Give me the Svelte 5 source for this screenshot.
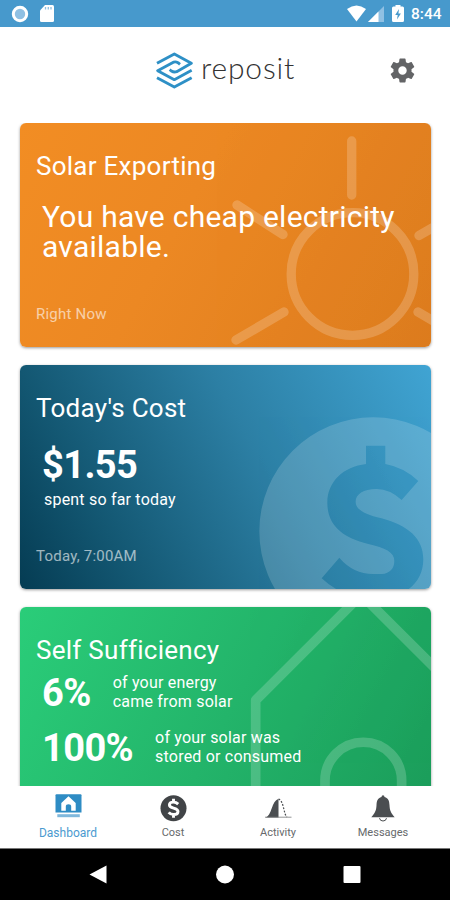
<script>
  const tabs = [
    { id: "dashboard", label: "Dashboard" },
    { id: "cost", label: "Cost" },
    { id: "activity", label: "Activity" },
    { id: "messages", label: "Messages" },
  ];

  const sufficiency = [
    { value: "6%", lines: ["of your energy", "came from solar"] },
    { value: "100%", lines: ["of your solar was", "stored or consumed"] },
  ];

  let active = $state("dashboard");
</script>

<div class="screen">
  <div class="status">
    <svg class="sync" width="18" height="18" viewBox="0 0 18 18">
      <circle cx="9" cy="9" r="6.700" fill="#8fc0e3" stroke="#fff" stroke-width="3" />
    </svg>
    <svg class="sd" width="14" height="17" viewBox="0 0 14 17">
      <path d="M5 0H12.500Q14 0 14 1.500V15.500Q14 17 12.500 17H1.500Q0 17 0 15.500V5.500Z" fill="#fff" />
      <path d="M5.500 2V4.500M8.300 2V4.500M11 2V4.500" stroke="#8fc0e3" stroke-width="1.300" />
    </svg>
    <span class="spacer"></span>
    <svg class="wifi" width="19" height="17" viewBox="0 0 19 17">
      <path d="M0 4Q9.500 -3 19 4L9.500 16.500Z" fill="#fff" />
    </svg>
    <svg class="signal" width="16" height="16" viewBox="0 0 16 16">
      <path d="M16 0V16H0Z" fill="#8fc0e3" />
      <path d="M10.500 5.500V16H0Z" fill="#fff" />
    </svg>
    <svg class="battery" width="12" height="17" viewBox="0 0 12 17">
      <path d="M3.500 0H8.500V1.500H10.500Q12 1.500 12 3V15.500Q12 17 10.500 17H1.500Q0 17 0 15.500V3Q0 1.500 1.500 1.500H3.500Z" fill="#fff" />
      <path d="M7 4L3.200 10H5.700L5 14.500L8.900 8.400H6.400Z" fill="#4799cc" />
    </svg>
    <span class="clock">8:44</span>
  </div>

  <header>
    <div class="brand">
      <svg width="37" height="37" viewBox="0 0 111 111">
        <g fill="none" stroke="#2e90c6" stroke-width="8.500" stroke-linejoin="round">
          <path d="M3 34L55 6L106 34L62 59Q54 62 46 57L41 53" />
          <path d="M72 37L66 32Q57 27 48 33L5 56L55 83L107 55" />
          <path d="M3 77L55 105L107 77" />
        </g>
      </svg>
      <span>reposit</span>
    </div>
    <svg class="gear" width="29" height="29" viewBox="0 0 24 24">
      <path
        fill="#636466"
        d="M19.430 12.980c.04-.32.07-.64.07-.98s-.03-.66-.07-.98l2.110-1.650c.19-.15.24-.42.12-.64l-2-3.460c-.12-.22-.39-.3-.61-.22l-2.490 1c-.52-.4-1.080-.73-1.690-.98l-.38-2.650C14.460 2.180 14.250 2 14 2h-4c-.25 0-.46.18-.49.42l-.38 2.650c-.61.25-1.170.59-1.690.98l-2.490-1c-.23-.09-.49 0-.61.22l-2 3.460c-.13.22-.07.49.12.64l2.110 1.650c-.04.32-.07.65-.07.98s.03.66.07.98l-2.110 1.650c-.19.15-.24.42-.12.64l2 3.460c.12.22.39.3.61.22l2.490-1c.52.4 1.080.73 1.690.98l.38 2.650c.03.24.24.42.49.42h4c.25 0 .46-.18.49-.42l.38-2.650c.61-.25 1.170-.59 1.690-.98l2.490 1c.23.09.49 0 .61-.22l2-3.460c.12-.22.07-.49-.12-.64l-2.110-1.650zM12 15.500c-1.930 0-3.500-1.570-3.500-3.500s1.570-3.500 3.500-3.500 3.500 1.570 3.500 3.500-1.570 3.500-3.500 3.500z"
      />
    </svg>
  </header>

  <main>
    <section class="card solar">
      <svg class="art" width="411" height="224" viewBox="0 0 411 224">
        <g fill="none" stroke="#fff" stroke-width="9.300" stroke-linecap="round">
          <circle cx="332.500" cy="151" r="61.300" />
          <path d="M331.700 18V72M217 82L263 111.500M264 189L216 217M399 112.500L447 85M398 189L446 217" />
        </g>
      </svg>
      <h2>Solar Exporting</h2>
      <p class="headline">You have cheap electricity available.</p>
      <p class="when">Right Now</p>
    </section>

    <section class="card cost">
      <svg class="art" width="411" height="224" viewBox="0 0 411 224">
        <!-- coin with the dollar sign cut out -->
        <g transform="translate(205 -10) scale(.3333)">
          <path
            fill="#fff"
            fill-rule="evenodd"
            d="M103 529A342 342 0 1 0 787 529A342 342 0 1 0 103 529Z
               M423 272H481V327Q537 337 580 378L530 435Q494 402 455 402C415 402 392 418 392 440C392 465 420 478 470 490C550 512 595 550 595 613C595 665 565 706 510 722L481 728V790H423V730Q345 722 290 670L343 608Q385 657 445 657H470C495 655 508 640 508 617C508 592 480 578 430 567C350 547 307 510 307 443C307 380 355 335 423 327Z"
          />
        </g>
      </svg>
      <h2>Today's Cost</h2>
      <p class="amount">$1.55</p>
      <p class="note">spent so far today</p>
      <p class="when">Today, 7:00AM</p>
    </section>

    <section class="card self">
      <svg class="art" width="411" height="224" viewBox="0 0 411 224">
        <g transform="translate(205 -6.700) scale(.3333)" fill="none" stroke="#fff" stroke-width="29">
          <path d="M92 720V300L409 -17L740 313" stroke-linejoin="round" />
          <path d="M300 720V541A115 115 0 0 1 530 541V720" />
        </g>
      </svg>
      <h2>Self Sufficiency</h2>
      <div class="stats">
        {#each sufficiency as row}
          <div class="stat">
            <span class="amount">{row.value}</span>
            <span class="note">{row.lines[0]}<br />{row.lines[1]}</span>
          </div>
        {/each}
      </div>
    </section>
  </main>

  <nav class="tabs">
    {#each tabs as tab}
      <button class:active={active === tab.id} onclick={() => (active = tab.id)}>
        <svg width="30" height="30" viewBox="0 0 30 30">
          {#if tab.id === "dashboard"}
            <path d="M3.500 2.300H27.500Q28.500 2.300 28.500 3.300V20.500H2.500V3.300Q2.500 2.300 3.500 2.300Z" fill="#2e8cc4" />
            <path d="M15.500 4.300L8.300 11V18.700H12.800V14.500Q12.800 12.300 15.500 12.300T18.200 14.500V18.700H22.700V11Z" fill="#fff" />
            <path d="M4.300 22.200H26.800V25.200H4.300Z" fill="#7fb8dc" />
          {:else if tab.id === "cost"}
            <circle cx="15.500" cy="16.300" r="13" fill="#414447" />
            <path
              d="M20.200 12.100Q18.200 10.100 15.500 10.100C12.700 10.100 11.400 11.500 11.400 13C11.400 17 20 15.100 20 19.400C20 21.300 18.200 22.500 15.700 22.500Q12.500 22.500 10.700 20.300M15.500 6.800V10.300M15.500 22.300V25.800"
              fill="none"
              stroke="#fff"
              stroke-width="2.900"
            />
          {:else if tab.id === "activity"}
            <path d="M2.500 25.500C9 24 8.500 8.500 15.500 7V25.500Z" fill="#4b4e51" />
            <path d="M15.500 7.200C21 8.500 20.500 22.500 24 25" fill="none" stroke="#4b4e51" stroke-width="1.200" stroke-dasharray="1.800 1.500" />
            <path d="M2 25.200H28.500" stroke="#77797b" stroke-width=".8" />
          {:else}
            <path d="M15 3.300Q16.500 3.300 16.500 5.100C20.500 6.100 21.300 9.300 21.500 13.300C21.700 18.300 23 21.300 26.700 25.200H3.300C7 21.300 8.300 18.300 8.500 13.300C8.700 9.300 9.500 6.100 13.500 5.100Q13.500 3.300 15 3.300Z" fill="#4b4e51" />
            <path d="M11.500 26.200Q12 29 15 29T18.500 26.200" fill="none" stroke="#4b4e51" stroke-width="1" />
          {/if}
        </svg>
        <span>{tab.label}</span>
      </button>
    {/each}
  </nav>

  <div class="softkeys">
    <svg width="18" height="20" viewBox="0 0 18 20"><path d="M17.500 .5V18.500L.5 9.500Z" fill="#fff" /></svg>
    <svg width="18" height="20" viewBox="0 0 18 20"><circle cx="9" cy="9.500" r="9" fill="#fff" /></svg>
    <svg width="18" height="20" viewBox="0 0 18 20"><rect x=".5" y="1" width="17" height="17" rx="1" fill="#fff" /></svg>
  </div>
</div>

<style>
  :global(body) {
    margin: 0;
    background: #fff;
  }

  .screen {
    display: flex;
    flex-direction: column;
    width: 450px;
    height: 900px;
    overflow: hidden;
    background: #fff;
    font-family: Roboto, "Liberation Sans", sans-serif;
  }

  svg {
    display: block;
    flex: none;
  }

  .status {
    display: flex;
    align-items: center;
    box-sizing: border-box;
    height: 27px;
    padding: 0 9px 0 11px;
    background: #4799cc;
  }
  .sd {
    margin-left: 11px;
  }
  .spacer {
    flex: 1;
  }
  .signal {
    margin-left: 2px;
  }
  .battery {
    margin-left: 8px;
  }
  .clock {
    width: 30px;
    margin-left: 7px;
    color: #fff;
    font-size: 15.500px;
    font-weight: 500;
    line-height: 28px;
  }

  header {
    display: flex;
    align-items: center;
    justify-content: space-between;
    box-sizing: border-box;
    height: 96px;
    padding: 0 33px 10px 156px;
  }
  .brand {
    display: flex;
    align-items: center;
  }
  .brand span {
    margin: -6px 0 0 8px;
    color: #333;
    font-family: Lato, sans-serif;
    font-size: 30px;
    font-weight: 300;
    letter-spacing: 0.8px;
    line-height: 36px;
  }

  main {
    display: flex;
    flex: 1;
    flex-direction: column;
    gap: 18px;
    min-height: 0;
    padding: 0 19px 0 20px;
    overflow: hidden;
  }
  .card {
    position: relative;
    display: flex;
    flex: none;
    flex-direction: column;
    box-sizing: border-box;
    height: 224px;
    padding: 28px 16px 24px;
    overflow: hidden;
    border-radius: 6px;
    box-shadow: 0 1px 3px rgba(0, 0, 0, 0.4);
    color: #fff;
  }
  .solar {
    background: linear-gradient(118deg, #f28d23, #ec8823 40%, #dc7c1e);
  }
  .cost {
    background: linear-gradient(62deg, #053c53 0%, #135772 22%, #2c7fa4 58%, #40a4d3 100%);
  }
  .self {
    background: linear-gradient(118deg, #2acd79, #23b46a 50%, #1a9b59);
  }
  .art {
    position: absolute;
    top: 0;
    left: 0;
    opacity: 0.19;
  }
  .cost .art {
    opacity: 0.16;
  }

  h2,
  p {
    position: relative;
    margin: 0;
  }
  h2 {
    font-size: 26px;
    font-weight: 400;
    letter-spacing: 0.26px;
    line-height: 30px;
  }
  .headline {
    margin: 21px 0 0 6px;
    font-size: 30px;
    letter-spacing: 0.25px;
    line-height: 30px;
  }
  .when {
    margin-top: auto;
    opacity: 0.6;
    font-size: 15px;
    letter-spacing: 0.22px;
    line-height: 18px;
  }
  .amount {
    font-size: 38px;
    font-weight: 700;
    letter-spacing: -0.6px;
    line-height: 40px;
  }
  .note {
    font-size: 16px;
    letter-spacing: 0.2px;
    line-height: 19px;
  }
  .cost .amount {
    margin: 22px 0 0 6px;
  }
  .cost .note {
    margin: 5px 0 0 8px;
  }

  .stats {
    position: relative;
    display: flex;
    flex-direction: column;
    gap: 15px;
    margin: 8px 0 0 6px;
  }
  .stat {
    display: flex;
    gap: 22px;
    height: 40px;
  }

  .tabs {
    display: flex;
    box-sizing: border-box;
    height: 62px;
    padding: 0 15px;
  }
  button {
    display: flex;
    flex: 1;
    flex-direction: column;
    align-items: center;
    margin: 0;
    padding: 6px 0 0 1px;
    border: 0;
    background: none;
    color: #66696b;
    font: 11px/14px Roboto, sans-serif;
  }
  button span {
    margin-top: 4px;
  }
  .active {
    color: #4a9ad0;
    font-size: 12px;
  }

  .softkeys {
    display: flex;
    align-items: center;
    justify-content: space-between;
    box-sizing: border-box;
    height: 52px;
    padding: 0 89px;
    border-top: 1px solid #777;
    background: #000;
  }
</style>
